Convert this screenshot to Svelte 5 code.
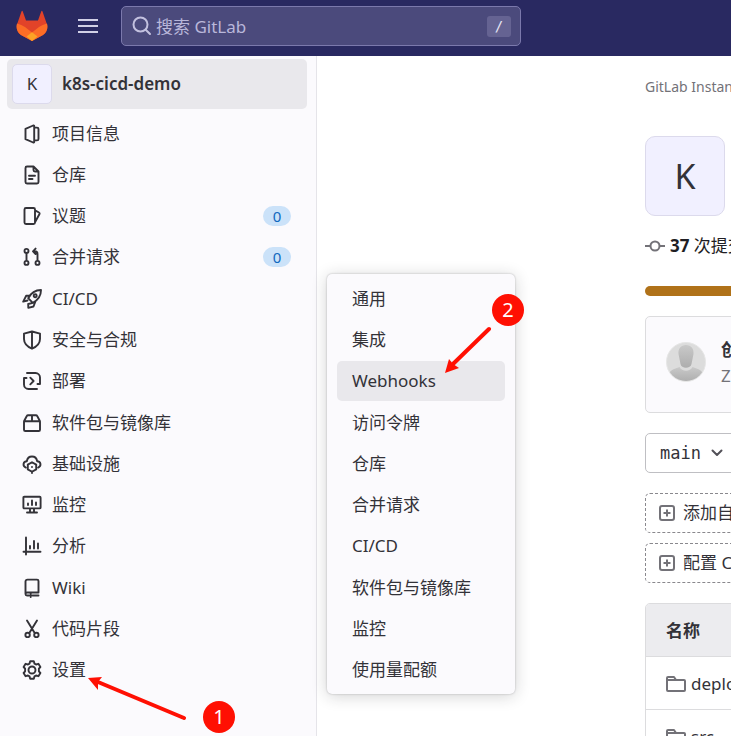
<script>
  const nav = [
    { label: '项目信息', icon: 'project' },
    { label: '仓库', icon: 'doc' },
    { label: '议题', icon: 'issues', count: 0 },
    { label: '合并请求', icon: 'merge', count: 0 },
    { label: 'CI/CD', icon: 'rocket' },
    { label: '安全与合规', icon: 'shield' },
    { label: '部署', icon: 'deploy' },
    { label: '软件包与镜像库', icon: 'package' },
    { label: '基础设施', icon: 'cloud' },
    { label: '监控', icon: 'monitor' },
    { label: '分析', icon: 'chart' },
    { label: 'Wiki', icon: 'book' },
    { label: '代码片段', icon: 'snippet' },
    { label: '设置', icon: 'gear' }
  ];

  const icons = {
    project: 'M3.5 4.800 11.200 1.500c.5-.2 1 .1 1 .6v15.800c0 .5-.5.8-1 .6L3.500 15.200zM12.200 3.600H15c.9 0 1.500.6 1.500 1.500v9.800c0 .9-.6 1.500-1.500 1.500h-2.800',
    doc: 'M11.5 1.5H5A1.5 1.5 0 0 0 3.5 3v14A1.5 1.5 0 0 0 5 18.5h10a1.5 1.5 0 0 0 1.5-1.5V6.500zM11.500 1.500V5A1.500 1.500 0 0 0 13 6.500h3.500M7 10.800h6M7 14h3.500',
    issues: 'M4 2h7.500A1.500 1.500 0 0 1 13 3.500v13a1.500 1.500 0 0 1-1.500 1.500H4a1.500 1.500 0 0 1-1.500-1.500v-13A1.500 1.500 0 0 1 4 2zM13 4.300l4 2.200c.6.3.8.9.5 1.500L13 16.300',
    merge: 'M4.500 6v7.800M15.500 13.800V7c0-1.700-1-2.700-2.700-2.700h-1.300M13.600 1.600 11 4.300 13.600 7M4.500 1.900a2 2 0 1 0 0 4 2 2 0 1 0 0-4zM4.500 13.900a2 2 0 1 0 0 4 2 2 0 1 0 0-4zM15.500 13.900a2 2 0 1 0 0 4 2 2 0 1 0 0-4z',
    rocket: 'M19 1C13 1 9.300 3.300 6.200 9.200L10.800 13.800C16.700 10.700 19 7 19 1zM13.200 5.300a1.500 1.500 0 1 0 0 3 1.500 1.500 0 1 0 0-3zM7.800 6.500 4.200 6.800 1.200 12.600 5.500 11.500M10.800 13.800 6.200 15 6.300 18.800 11.500 17.500 13.500 12.200',
    shield: 'M10 1.500 18 3.600V9c0 4.500-3.200 7.600-8 9.700C5.200 16.600 2 13.500 2 9V3.600zM10 1.500v17',
    deploy: 'M5 2h8.500A4.500 4.500 0 0 1 18 6.500v6.500h-2.500M15 18H6.500A4.500 4.500 0 0 1 2 13.500V7h2.500M8.300 6.700l3.300 3.300-3.300 3.300',
    package: 'M2 8.200h16v8.500c0 .8-.5 1.300-1.300 1.300H3.300c-.8 0-1.300-.5-1.300-1.300zM2 8.200 4.800 3c.3-.6.7-.8 1.300-.8h7.800c.6 0 1 .2 1.300.8L18 8.200M10 2.200v6',
    cloud: 'M3.800 13.600C.3 12 1 7.500 4.800 7.200 6 .9 14 .9 15.200 7.200c3.800.3 4.500 4.800 1 6.400M10 8.200l4.200 2.400v4.800L10 17.800l-4.200-2.400v-4.800zM10 12.900v.2M10 17.500V19',
    monitor: 'M2.300 1.800h15.400c.6 0 .9.300.9.900v9.800c0 .6-.3.900-.9.900H2.300c-.6 0-.9-.3-.9-.9V2.700c0-.6.300-.9.900-.9zM8 13.500V17M12 13.500V17M5 17.500h10M6 8.500v1.500M10 5.500v4.500M14 7.500v2.500',
    chart: 'M4 1.500v17M1.500 15.800h17M8 10v2.500M12 5v7.500M16 7.500v5',
    book: 'M3.500 15.800V3.600c0-1.200.8-2 2-2H15c1 0 1.500.5 1.500 1.500v11.400H5c-1 0-1.500.6-1.500 1.500s.6 1.500 1.500 1.500h2M16.500 17.500H10.500M8.700 14.500V19',
    snippet: 'M5 1.500 12.700 14M15 1.500 7.300 14M5.600 13.700a2.200 2.200 0 1 0 0 4.400 2.200 2.200 0 1 0 0-4.400zM14.400 13.700a2.200 2.200 0 1 0 0 4.400 2.200 2.200 0 1 0 0-4.400z',
    gear: 'M8.200 1.300h3.600l.7 2.300 1.500.9 2.400-.7 2 3.200-1.500 1.700v2.600l1.500 1.700-2 3.200-2.400-.7-1.500.9-.7 2.300H8.200l-.7-2.300-1.500-.9-2.400.7-2-3.200 1.500-1.700V8.700L1.600 7l2-3.200 2.400.7 1.500-.9zM10 6.500a3.500 3.500 0 1 0 0 7 3.500 3.500 0 1 0 0-7z'
  };

  const settings = ['通用', '集成', 'Webhooks', '访问令牌', '仓库', '合并请求', 'CI/CD', '软件包与镜像库', '监控', '使用量配额'];
  const actions = ['添加自述文件', '配置 CI/CD'];
  const files = ['deploy', 'src'];
</script>

<div class="page">
  <header>
    <a class="logo" href="#home" aria-label="GitLab">
      <svg width="32" height="32" viewBox="0 0 32 32">
        <path fill="#e24329" d="M1 14.500 5.500 1.500Q6.100.2 6.800 1.500L10 10.500h12L25.200 1.500Q25.900.2 26.500 1.500L31 14.500Q32.500 21 27 25L16 31 5 25Q-.5 21 1 14.500z" />
        <path fill="#fc6d26" d="M1 13.500Q-.8 20.500 5 25L16 31 27 25Q32.800 20.500 31 13.500 26.500 14.500 23 17L16 22.500 9 17Q5.500 14.500 1 13.500z" />
        <path fill="#fca326" d="M16 22.200 21.500 26.500 16 31 10.500 26.500z" />
      </svg>
    </a>
    <button class="burger" aria-label="菜单">
      <svg width="20" height="14" viewBox="0 0 20 14" stroke="#d1d0e6" stroke-width="2"><path d="M0 1h20M0 7h20M0 13h20" /></svg>
    </button>
    <label class="search">
      <svg width="20" height="20" viewBox="0 0 20 20" fill="none" stroke="#c3c1df" stroke-width="2" stroke-linecap="round"><circle cx="8.500" cy="8.500" r="7" /><path d="M13.700 13.700 18 18" /></svg>
      <input type="search" placeholder="搜索 GitLab" aria-label="搜索 GitLab" />
      <kbd>/</kbd>
    </label>
  </header>

  <div class="body">
    <aside>
      <a class="context" href="#project"><span class="avatar">K</span><span>k8s-cicd-demo</span></a>
      <nav>
        {#each nav as item}
          <a href="#{item.icon}">
            <svg class="line" width="20" height="20" viewBox="0 0 20 20"><path d={icons[item.icon]} /></svg>
            <span class="label">{item.label}</span>
            {#if item.count !== undefined}<span class="count">{item.count}</span>{/if}
          </a>
        {/each}
      </nav>
    </aside>

    <main>
      <div class="crumbs"><a href="#instance">GitLab Instance</a></div>
      <div class="avatar big">K</div>
      <div class="stats">
        <svg width="20" height="20" viewBox="0 0 20 20" fill="none" stroke="#737278" stroke-width="2"><circle cx="10" cy="10" r="4.500" /><path d="M0 10h5.500M14.500 10H20" /></svg>
        <span><strong>37</strong> 次提交</span>
      </div>
      <div class="languages"></div>
      <section class="commit">
        <svg width="40" height="40" viewBox="0 0 40 40">
          <defs>
            <clipPath id="round"><circle cx="20" cy="20" r="19" /></clipPath>
            <linearGradient id="shade" x2="0" y2="1"><stop stop-color="#c9c9c9" /><stop offset="1" stop-color="#adadad" /></linearGradient>
          </defs>
          <circle cx="20" cy="20" r="19.500" fill="#dcdcdc" stroke="#e6e6e6" />
          <g clip-path="url(#round)">
            <path fill="url(#shade)" d="M4 40V30C6 27 10 26.500 13.500 25 16 30 24 30 26.500 25 30 26.500 34 27 36 30V40z" />
            <path fill="url(#shade)" d="M20 3c5 0 8 3.500 7.500 9L25.500 22c-.8 5-10.200 5-11 0L12.500 12C12 6.500 15 3 20 3z" />
          </g>
        </svg>
        <div class="message"><strong>创建</strong><span>Z</span></div>
      </section>
      <button class="branch">main
        <svg width="12" height="8" viewBox="0 0 12 8" fill="none" stroke="#535158" stroke-width="2" stroke-linecap="round" stroke-linejoin="round"><path d="M1.500 1.500 6 6l4.500-4.500" /></svg>
      </button>
      <div class="actions">
        {#each actions as action}
          <a href="#add">
            <svg width="16" height="16" viewBox="0 0 16 16" fill="none" stroke="#737278" stroke-width="2"><rect x="1" y="1" width="14" height="14" rx="2" /><path d="M8 4.500v7M4.500 8h7" /></svg>
            {action}
          </a>
        {/each}
      </div>
      <div class="files">
        <table>
          <thead><tr><th scope="col">名称</th></tr></thead>
          <tbody>
            {#each files as file}
              <tr><td><a href="#{file}">
                <svg width="20" height="16" viewBox="0 0 20 16" fill="none" stroke="#737278" stroke-width="2"><path d="M1 4V2a1 1 0 0 1 1-1h5.500a1 1 0 0 1 .9.500L10 4h8a1 1 0 0 1 1 1v9a1 1 0 0 1-1 1H2a1 1 0 0 1-1-1V4h9" /></svg>{file}
              </a></td></tr>
            {/each}
          </tbody>
        </table>
      </div>
    </main>
  </div>

  <div class="flyout">
    {#each settings as item}
      <a href="#settings" class:active={item === 'Webhooks'}>{item}</a>
    {/each}
  </div>

  <svg class="arrows" width="731" height="736" viewBox="0 0 731 736" fill="#ff1003" stroke="#ff1003" stroke-linecap="round" stroke-width="4">
    <path d="M184 718 98 682M489 329 453 364" />
    <path stroke="none" d="M88 678 102 677 98 682 98 690zM445 373 449 359 453 364 459 368z" />
  </svg>
  <span class="step one">1</span>
  <span class="step two">2</span>
</div>

<style>
  :global(body) { margin: 0; }
  .page, .page * { box-sizing: border-box; }
  .page {
    position: relative; display: flex; flex-direction: column; height: 100vh; overflow: hidden;
    font: 17px/24px "Noto Sans", "Noto Sans CJK SC", sans-serif; color: #333238; background: #fff;
  }
  a { color: inherit; text-decoration: none; }
  button { font: inherit; color: inherit; padding: 0; cursor: pointer; }
  svg { flex: none; display: block; }

  header { display: flex; align-items: center; flex: none; height: 56px; padding: 0 16px; background: #292961; }
  .logo { margin-bottom: 4px; }
  .burger { border: 0; background: none; margin: 0 23px 4px 30px; }
  .search {
    display: flex; align-items: center; gap: 4px; width: 400px; height: 40px; margin-bottom: 4px; padding: 0 9px 0 10px;
    border: 1px solid #7b79ac; border-radius: 5px; background: #4b4a7c;
  }
  .search input {
    flex: 1; min-width: 0; padding: 2px 0 0; border: 0; outline: 0; background: none;
    font: inherit; color: #fff;
  }
  .search input::placeholder { color: #b9b7da; opacity: 1; }
  kbd {
    width: 24px; height: 21px; border-radius: 3px; background: #656392; color: #e6e5f5;
    font: 14px/21px "DejaVu Sans Mono", monospace; text-align: center;
  }

  .body { display: flex; flex: 1; min-height: 0; }
  aside { flex: none; width: 317px; padding: 3px 9px 0 7px; border-right: 1px solid #e5e4e9; background: #fbfafd; }
  .context {
    display: flex; align-items: center; gap: 10px; height: 50px; padding: 0 5px; border-radius: 5px;
    background: #e9e8ec; font-weight: 600;
  }
  .avatar {
    display: flex; align-items: center; justify-content: center; width: 40px; height: 40px;
    border: 1px solid #dcdaec; border-radius: 5px; background: #f1f0ff; font-weight: 400;
  }
  nav { display: flex; flex-direction: column; justify-content: space-between; height: 578px; margin-top: 4px; }
  nav a { display: flex; align-items: center; gap: 10px; height: 41px; padding: 0 16px 0 15px; }
  .label { flex: 1; }
  .line { fill: none; stroke: #333238; stroke-width: 1.9; stroke-linejoin: round; stroke-linecap: round; }
  .count { width: 28px; border-radius: 10px; background: #cbe2f9; color: #1068bf; font-size: 15px; line-height: 20px; text-align: center; }

  main { flex: 1; min-width: 0; padding: 19px 0 0 328px; overflow: hidden; white-space: nowrap; }
  main > * { min-width: 400px; }
  .crumbs { font-size: 14px; color: #737278; }
  .avatar.big { width: 80px; min-width: 0; height: 80px; margin-top: 37px; border-radius: 10px; font-size: 34px; }
  .stats { display: flex; align-items: center; gap: 5px; margin-top: 18px; color: #1f1e24; }
  .languages { height: 10px; margin-top: 28px; border-radius: 5px; background: #b07219; }
  .commit {
    display: flex; align-items: center; gap: 15px; height: 97px; margin-top: 20px; padding: 0 20px 6px;
    border: 1px solid #dcdcde; border-radius: 5px; background: #fbfafd;
  }
  .message { display: flex; flex-direction: column; gap: 2px; padding-top: 2px; color: #737278; }
  .message strong { color: #333238; }
  .branch {
    display: flex; align-items: center; gap: 10px; min-width: 0; height: 40px; margin-top: 20px; padding: 0 14px;
    border: 1px solid #bfbfc3; border-radius: 5px; background: #fff; font: 17px/24px "DejaVu Sans Mono", monospace;
  }
  .actions { display: flex; flex-direction: column; gap: 10px; margin-top: 20px; }
  .actions a {
    display: flex; align-items: center; gap: 8px; height: 40px; padding: 0 13px;
    border: 1px dashed #89888d; border-radius: 5px;
  }
  .files { margin-top: 20px; border: 1px solid #dcdcde; border-radius: 5px; overflow: hidden; }
  table { width: 100%; border-collapse: separate; border-spacing: 0; }
  th, td { height: 53px; padding: 2px 20px 0; border-bottom: 1px solid #dcdcde; text-align: left; }
  th { background: #ececef; }
  td a { display: flex; align-items: center; gap: 5px; }

  .flyout {
    position: absolute; left: 327px; top: 274px; display: flex; flex-direction: column; justify-content: space-between;
    width: 188px; height: 420px; padding: 5px 10px 4px; border-radius: 5px; background: #fbfafd;
    box-shadow: 0 0 2px rgba(31, 30, 36, 0.3), 0 2px 16px rgba(31, 30, 36, 0.2);
  }
  .flyout a { padding: 8px 15px; border-radius: 5px; }
  .flyout .active { background: #e9e8ec; }

  .arrows { position: absolute; left: 0; top: 0; pointer-events: none; }
  .step {
    position: absolute; width: 32px; height: 32px; border-radius: 50%; background: #ff1003; color: #fff;
    font-size: 20px; line-height: 32px; text-align: center;
  }
  .one { left: 203px; top: 701px; }
  .two { left: 492px; top: 294px; }
</style>
